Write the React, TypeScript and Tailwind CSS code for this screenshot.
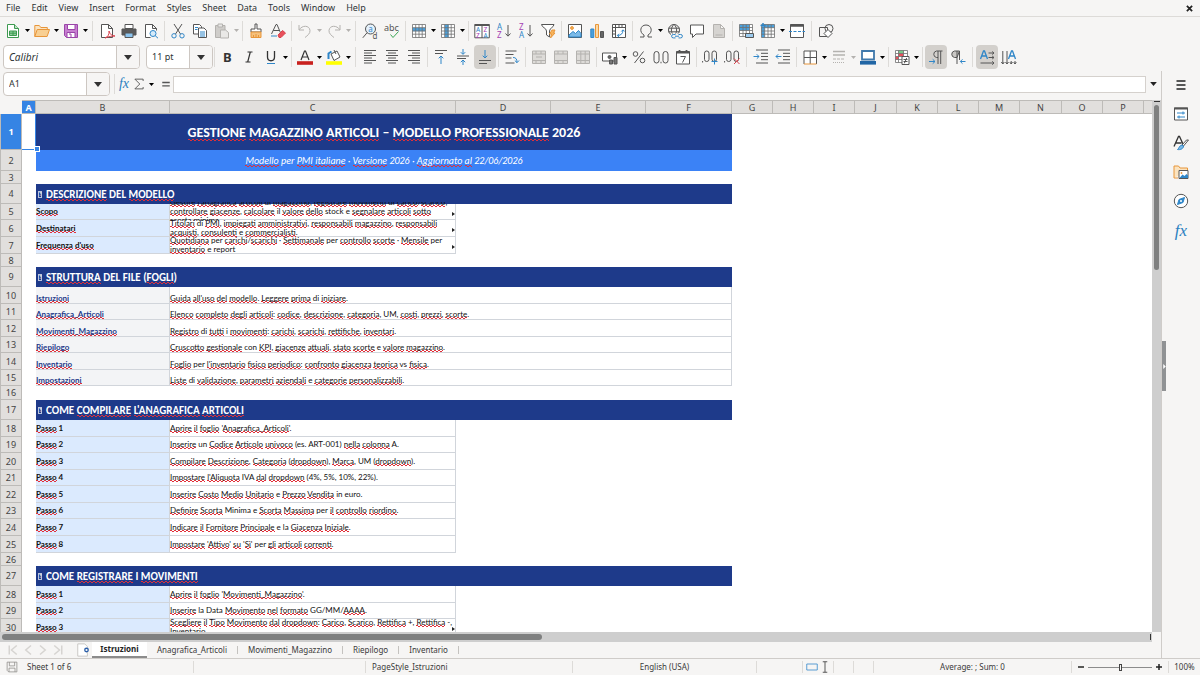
import { Fragment, type ReactNode } from "react";

const INK = "#555555";
const BLUE = "#2f86c8";
const ORANGE = "#e8963a";
const GREY = "#b4b2af";

/* ---------- icons, all on a 16 x 16 grid ---------- */

const sheetLines = (
  <path d="M1.5 1.5h13v13h-13zM1.5 4.7h13M1.5 8h13M1.5 11.2h13M4.7 1.5v13M8 1.5v13M11.2 1.5v13" stroke="#707070" strokeWidth=".8" />
);

const letter = (x: number, y: number, ch: string, fill: string, size = 7) => (
  <text x={x} y={y} fontSize={size} fill={fill} stroke="none" fontFamily="Noto Sans, sans-serif">{ch}</text>
);

const icons: Record<string, ReactNode> = {
  newDoc: (
    <>
      <path d="M2.5 1.5h7l4 4v9h-11z" fill="#fff" stroke="#3d9a50" />
      <path d="M9.5 1.5v4h4" fill="#bfe3c6" stroke="#3d9a50" />
      <path d="M4.5 8h7v4.5h-7zM4.5 10.2h7M8 8v4.5" fill="#8fd09b" stroke="#3d9a50" />
    </>
  ),
  open: (
    <>
      <path d="M.8 13.5v-11h4.5l1.5 2h6.5v2" fill="#fbe3bf" stroke={ORANGE} />
      <path d="M.8 13.5l2.4-7h12.3l-2.4 7z" fill="#f8cf92" stroke={ORANGE} />
    </>
  ),
  save: (
    <>
      <path d="M1.5 1.5h13v13h-11l-2-2z" fill="#c77fd0" stroke="#9a45a8" />
      <path d="M4.5 1.5H12v5H4.5zM4 9.5h8v5H4z" fill="#fff" stroke="#9a45a8" />
      <path d="M6 11h2v3.5" stroke="#9a45a8" />
    </>
  ),
  pdf: (
    <>
      <path d="M2.5 1.5h7l4 4v9h-11zM9.5 1.5v4h4" fill="#fff" stroke={INK} />
      <path d="M6 15c3-1 4.5-4 4-7 1 3.5 3 5 6 5-3 0-6.5.5-10 2z" stroke="#d8434e" />
    </>
  ),
  print: (
    <>
      <path d="M4 1.5h8v4H4z" fill="#fff" stroke={INK} />
      <path d="M1 6h14v6H1z" fill="#5a5a5a" stroke={INK} />
      <path d="M4 10h8v4.5H4z" fill="#8cc4ee" stroke={INK} />
    </>
  ),
  preview: (
    <>
      <path d="M7.5 14.5h-5v-13h7l4 4v2M9.5 1.5v4h4" fill="#fff" stroke={INK} />
      <circle cx="10" cy="10.5" r="3" fill="#d6ebfa" stroke={BLUE} />
      <path d="M12.2 12.7l2.8 2.5" stroke={BLUE} />
    </>
  ),
  cut: (
    <>
      <path d="M4 1l6.5 10M12 1L5.5 11" stroke={INK} />
      <circle cx="4" cy="12.8" r="2.2" stroke={BLUE} />
      <circle cx="12" cy="12.8" r="2.2" stroke={BLUE} />
    </>
  ),
  copy: (
    <>
      <path d="M1.5 1.5h6l2 2V11h-8z" fill="#fff" stroke={INK} />
      <path d="M6.5 5H12l2.5 2.5v7h-8z" fill="#fff" stroke={INK} />
      <path d="M3 4.5h3M3 6.5h2.5M8 9h5M8 11h5M8 13h5" stroke={BLUE} />
    </>
  ),
  paste: (
    <>
      <path d="M1.5 2.5H11v12H1.5z" fill="#cfcdca" stroke={GREY} />
      <path d="M4 1h4.5v3H4z" fill="#e9e8e6" stroke={GREY} />
      <path d="M6.5 7h5l3 2.5V15h-8z" fill="#e9e8e6" stroke={GREY} />
    </>
  ),
  brush: (
    <>
      <path d="M7 1h2v5h4v3H3V6h4z" fill="#fff" stroke={INK} />
      <path d="M3 9h10v5.5H3z" fill="#f5c17d" stroke={ORANGE} />
      <path d="M5.5 12v2.5M8 11v3.5M10.5 12v2.5" stroke={ORANGE} />
    </>
  ),
  clear: (
    <>
      <path d="M1.5 11L6 1.5h1L11 11M3.2 7.5h6" stroke={INK} />
      <path d="M1 13h6" stroke={BLUE} />
      <path d="M8 12l4.5-4.5 3 2.5-4.5 4.5H9z" fill="#e8505b" stroke="#d8434e" />
    </>
  ),
  undo: <path d="M2 2v5h5M2.2 6.8C5 2 12.5 2 13 7.5c.3 3-2.5 5-5 7" stroke={GREY} />,
  redo: <path d="M14 2v5H9M13.8 6.8C11 2 3.5 2 3 7.5c-.3 3 2.5 5 5 7" stroke={GREY} />,
  find: (
    <>
      <circle cx="8.5" cy="6" r="5" fill="#e4f1fb" stroke={INK} />
      <path d="M5 9.8L.8 14.8" stroke={INK} />
      {letter(6.2, 8.5, "a", BLUE, 8)}
      {letter(10.5, 15.5, "d", INK, 8)}
    </>
  ),
  spell: (
    <>
      {letter(0, 8, "abc", INK, 9)}
      <path d="M6.5 11.5l2.5 3 5.5-6" stroke="#3aa655" />
    </>
  ),
  rows: (
    <>
      <path d="M1.5 1.5h13v13h-13z" fill="#fff" />
      <path d="M1.5 4.7h13v3.5h-13z" fill="#4aa0dc" />
      {sheetLines}
    </>
  ),
  cols: (
    <>
      <path d="M1.5 1.5h13v13h-13z" fill="#fff" />
      <path d="M4.7 1.5h4v13h-4z" fill="#4aa0dc" />
      {sheetLines}
    </>
  ),
  sort: (
    <>
      <path d="M.8 1.5h14.5v13.3H.8zM8 3v12" fill="#fff" stroke={INK} />
      <path d="M.8 2h14.5" stroke={INK} strokeWidth="2" />
      {letter(2, 9, "A", BLUE, 6.5)}
      {letter(2, 14.5, "Z", "#a541b3", 6.5)}
      {letter(9.5, 9, "Z", "#a541b3", 6.5)}
      {letter(9.5, 14.5, "A", BLUE, 6.5)}
    </>
  ),
  sortAsc: (
    <>
      {letter(1, 7, "A", BLUE, 8)}
      {letter(1, 15, "Z", "#a541b3", 8)}
      <path d="M12 2v11M9.5 10.5l2.5 2.7 2.5-2.7" stroke={INK} />
    </>
  ),
  sortDesc: (
    <>
      {letter(1, 7, "Z", "#a541b3", 8)}
      {letter(1, 15, "A", BLUE, 8)}
      <path d="M12 2v11M9.5 10.5l2.5 2.7 2.5-2.7" stroke={INK} />
    </>
  ),
  filter: (
    <>
      <path d="M1.5 1.5H14c-.3 3-4.5 3.5-4.5 6.5v6l-3-2V8c0-3-4.7-3.5-5-6.5z" fill="#fff" stroke={INK} />
      <path d="M12 7h3l-1.5 3H15l-4.5 5 1-4H9.5z" fill="#f7b35b" stroke={ORANGE} />
    </>
  ),
  image: (
    <>
      <path d="M1.5 1.5h13v13h-13z" fill="#fff" stroke={INK} />
      <circle cx="5" cy="5" r="1.4" fill="#f7b35b" stroke={ORANGE} />
      <path d="M2 14v-2l4-3.5 2.5 2 3-3 2.5 3V14z" fill="#7cbbe9" stroke={BLUE} />
    </>
  ),
  chart: (
    <>
      <path d="M1.8 6h3v8.5h-3z" fill="#4aa0dc" stroke={BLUE} />
      <path d="M6.5 1.5h3v13h-3z" fill="#fbd9a6" stroke={ORANGE} />
      <path d="M11.5 8.5h3v6h-3z" fill="#666" stroke={INK} />
    </>
  ),
  pivot: (
    <>
      <path d="M1.5 1.5h13v13h-13zM1.5 4.5h13M4.5 1.5v13M8 1.5v3M11 1.5v3M1.5 8h3M1.5 11h3" fill="#fff" stroke={INK} />
      <path d="M6.5 12.5c3.5 0 5.5-2 5.5-5.5M8 10.8l-1.7 1.7L8 14M10.3 8.5L12 6.8l1.7 1.7" stroke={BLUE} />
    </>
  ),
  omega: <path d="M2 14h4v-2C1 9.5 2 2 8 2s7 7.5 2 10v2h4" stroke={INK} />,
  link: (
    <>
      <circle cx="7" cy="7" r="5.5" stroke={INK} />
      <path d="M1.5 5.2h11M1.5 8.8h11M7 1.5c-3.5 3-3.5 8 0 11M7 1.5c3.5 3 3.5 8 0 11" stroke={INK} />
      <path d="M4 10.5h12v5H4z" fill="#f6f5f4" />
      <path d="M8.5 11.5H6.3a1.7 1.7 0 000 3.4h2.2M11.5 11.5h2.2a1.7 1.7 0 010 3.4h-2.2M8 13.2h4" stroke={BLUE} />
    </>
  ),
  comment: <path d="M1.5 2h13v9H7l-3.5 3.5V11h-2z" fill="#fff" stroke={INK} />,
  page: <path d="M2.5 1.5h7l4 4v9h-11zM9.5 1.5v4h4M4.5 12h7" fill="#d6d4d1" stroke={GREY} />,
  printArea: (
    <>
      <path d="M1.5 1.5h13v12h-13z" fill="#fff" />
      <path d="M1.5 1.5h10v6h-10z" fill="#4aa0dc" />
      <path d="M1.5 1.5h13v12h-13zM1.5 4.5h13M1.5 7.5h13M1.5 10.5h13M5 1.5v12M8.2 1.5v12M11.5 1.5v12" stroke="#707070" strokeWidth=".8" />
      <path d="M7.5 10.5h8v4h-8z" fill="#9bcbef" stroke={INK} />
    </>
  ),
  freeze: (
    <>
      <path d="M1.5 1.5h13v13h-13z" fill="#fff" />
      <path d="M1.5 4.5h3.2v10H1.5zM4 1.5h10.5v3.2H4z" fill="#4aa0dc" />
      {sheetLines}
      <path d="M3 0v5M.5 2.5h5" stroke={BLUE} strokeWidth="1.5" />
    </>
  ),
  split: (
    <>
      <path d="M1.5 1.5h13v13h-13z" fill="#fff" stroke={INK} />
      <path d="M1.5 2.5h13" stroke={INK} strokeWidth="2.5" />
      <path d="M0 8.5h16" stroke={BLUE} strokeDasharray="3 1.5" />
    </>
  ),
  shapes: (
    <>
      <path d="M1.5 4.5h8v9h-8z" stroke={INK} />
      <circle cx="11" cy="5.5" r="4" stroke={INK} />
      <path d="M10 6.5l4 4-4 4-4-4z" fill="#fff" stroke={INK} />
    </>
  ),
  bold: <text x="4" y="13" fontSize="13" fontWeight="700" fill="#333" fontFamily="Noto Sans, sans-serif">B</text>,
  italic: <path d="M6.5 3h5M4.5 13h5M9.3 3l-2.6 10" stroke="#333" strokeWidth="1.2" />,
  underline: (
    <>
      <path d="M4.5 2v6c0 5 7 5 7 0V2" stroke="#333" strokeWidth="1.3" />
      <path d="M4 14.5h8" stroke={BLUE} />
    </>
  ),
  fontColor: (
    <>
      <path d="M4 11L7.5 2h1L12 11M5.3 8h5.4" stroke="#333" strokeWidth="1.2" />
      <path d="M0 12.2h16v3.6H0z" fill="#c9211e" />
    </>
  ),
  fillColor: (
    <>
      <path d="M5 5l6-3 3 6-6 3.5zM8 1l2 4" fill="#fff" stroke={INK} />
      <path d="M2.5 10V4.5l3-2" stroke={BLUE} strokeWidth="2" />
      <path d="M0 12.2h16v3.6H0z" fill="#ff0" />
    </>
  ),
  left: <path d="M2 1.5h12M2 4h8M2 6.5h12M2 9h8M2 11.5h12M2 14h8" stroke={INK} />,
  center: <path d="M2 1.5h12M4 4h8M2 6.5h12M4 9h8M2 11.5h12M4 14h8" stroke={INK} />,
  right: <path d="M2 1.5h12M6 4h8M2 6.5h12M6 9h8M2 11.5h12M6 14h8" stroke={INK} />,
  top: (
    <>
      <path d="M2 1.5h12M2 4.5h8" stroke={INK} />
      <path d="M8 15V7M5.7 9.3L8 7l2.3 2.3" stroke={BLUE} />
    </>
  ),
  middle: (
    <>
      <path d="M2 7h12M2 9.5h9" stroke={INK} />
      <path d="M8 0v5M5.8 3.2L8 5.4l2.2-2.2M8 16v-5M5.8 13.2L8 11l2.2 2.2" stroke={BLUE} />
    </>
  ),
  bottom: (
    <>
      <path d="M2 11.5h12M2 14.5h8" stroke={INK} />
      <path d="M8 1v8M5.7 6.7L8 9l2.3-2.3" stroke={BLUE} />
    </>
  ),
  wrap: (
    <>
      <path d="M1.5 2h11M1.5 5.5h8M1.5 9h6M1.5 14h9" stroke={INK} />
      <path d="M9 8.5c3 0 4 1.5 4 5M10.8 11.5l2.2 2.2 2-2.2" stroke={BLUE} />
    </>
  ),
  merge: <path d="M1.5 2h13v12.5h-13zM1.5 5h13M1.5 11.5h13M5 2v3M10 2v3M5 11.5v3M10 11.5v3M5 8h6" fill="#dddbd8" stroke={GREY} />,
  mergeCells: <path d="M1.5 2h13v12.5h-13zM1.5 5h13M1.5 11.5h13M5 2v3M10 2v3M5 11.5v3M10 11.5v3" fill="#dddbd8" stroke={GREY} />,
  unmerge: <path d="M1.5 2h13v12.5h-13zM1.5 5h13M1.5 11.5h13M5.8 2v12.5M10.2 2v12.5" fill="#dddbd8" stroke={GREY} />,
  currency: (
    <>
      <path d="M.5 4h14v8H.5z" fill="#fff" stroke={INK} />
      <circle cx="7.5" cy="8" r="1.5" fill="#666" stroke={INK} />
      <path d="M7.5 11h3v4h-3zM12 8.5h3V15h-3z" fill="#777" stroke={INK} />
    </>
  ),
  percent: (
    <>
      <circle cx="4.5" cy="5" r="2.3" stroke={INK} />
      <circle cx="11.5" cy="11.5" r="2.3" stroke={INK} />
      <path d="M12.5 2.5l-9 11.5" stroke={INK} />
    </>
  ),
  number: (
    <>
      <rect x="1" y="2.5" width="5" height="11.5" rx="2.5" stroke={INK} />
      <rect x="10" y="2.5" width="5" height="11.5" rx="2.5" stroke={INK} />
      <path d="M8 12.8v1.5" stroke={INK} />
    </>
  ),
  date: (
    <>
      <path d="M1.5 2.5h13V15h-13z" fill="#fff" stroke={INK} />
      <path d="M1.5 3.5h13M4.5 1v3M11.5 1v3" stroke={INK} strokeWidth="1.8" />
      <path d="M5.5 7.5h5l-3 6" stroke={INK} />
    </>
  ),
  addDec: (
    <>
      <rect x="2.5" y="2" width="4.5" height="10.5" rx="2.2" stroke={INK} />
      <rect x="10" y="2" width="4.5" height="10.5" rx="2.2" stroke={INK} />
      <path d="M.6 12v1.5" stroke={INK} />
      <path d="M12.5 9.5v6M9.5 12.5h6" stroke={BLUE} />
    </>
  ),
  delDec: (
    <>
      <rect x="2.5" y="2" width="4.5" height="10.5" rx="2.2" stroke={INK} />
      <rect x="10" y="2" width="4.5" height="10.5" rx="2.2" stroke={INK} />
      <path d="M.6 12v1.5" stroke={INK} />
      <path d="M10 9.5l5.5 5.5M15.5 9.5L10 15" stroke="#d8434e" />
    </>
  ),
  indent: (
    <>
      <path d="M3 1h12M8 4.3h7M8 7.5h7M8 10.7h7M3 14h12" stroke={INK} />
      <path d="M.5 7.5H6M3.8 5.3L6 7.5 3.8 9.7" stroke={BLUE} />
    </>
  ),
  outdent: (
    <>
      <path d="M3 1h12M8 4.3h7M8 7.5h7M8 10.7h7M3 14h12" stroke={INK} />
      <path d="M6.5 7.5H1M3.2 5.3L1 7.5l2.2 2.2" stroke={BLUE} />
    </>
  ),
  borders: (
    <>
      <path d="M2 15V2h12.5v13M8.2 2v13M2 8.5h12.5" fill="#fff" stroke={INK} />
      <path d="M2 15h12.5" stroke={ORANGE} />
    </>
  ),
  lineStyle: (
    <>
      <path d="M2 2.5h12M2 6h12" stroke={GREY} strokeWidth="1.5" />
      <path d="M2 10h12" stroke={GREY} strokeDasharray="3 1" />
      <path d="M2 13.5h12" stroke={GREY} strokeDasharray="1 1" />
    </>
  ),
  lineColor: (
    <>
      <path d="M2 2h12v8.5H2z" fill="#fff" stroke="#3f78ab" strokeWidth="1.8" />
      <path d="M0 12h16v3.6H0z" fill="#2166a5" />
    </>
  ),
  conditional: (
    <>
      <path d="M1.5 1.5h12v12h-12z" fill="#fff" />
      <path d="M4.5 1.5h5v3h-5z" fill="#79c789" />
      <path d="M4.5 4.5h5v3h-5zM1.5 7.5h3v3h-3z" fill="#e8505b" />
      <path d="M1.5 1.5h12v12h-12zM1.5 4.5h12M1.5 7.5h12M1.5 10.5h12M4.5 1.5v12M9.5 1.5v12" stroke="#707070" strokeWidth=".8" />
      <path d="M8 7.5h7v8H8z" fill="#fff" stroke={INK} />
      <path d="M9.5 10.5h4M9.5 12.5h4M12.7 9l-2.4 5.3" stroke={INK} />
    </>
  ),
  ltr: (
    <>
      <path d="M14.5 2h-6a3.3 3.3 0 000 6.5H10M10 2v13M12.7 2v13" stroke={INK} />
      <path d="M1 12.5h6M4.7 10.3L7 12.5l-2.3 2.2" stroke={BLUE} />
    </>
  ),
  rtl: (
    <>
      <path d="M9.5 2h-5a3.3 3.3 0 000 6.5H7z" fill="#c9c7c4" stroke={INK} />
      <path d="M7 2v13M9.5 2v9" stroke={INK} />
      <path d="M15.5 12.5h-5M12.5 10.3l-2.2 2.2 2.2 2.2" stroke={BLUE} />
    </>
  ),
  textLtr: (
    <>
      <path d="M1.5 10l3-8h1l3 8M2.5 7h5" stroke={BLUE} strokeWidth="1.3" />
      <path d="M9.5 4H15M13.2 2.5L15 4l-1.8 1.5M9.5 8.5H15M13.2 7L15 8.5 13.2 10M1.5 14H15M13.2 12.3L15 14l-1.8 1.7" stroke={INK} />
    </>
  ),
  textTtb: (
    <>
      <path d="M7.5 10l3-8h1l3 8M8.5 7h5" stroke={BLUE} strokeWidth="1.3" />
      <path d="M1.8 2v13M.3 13l1.5 2 1.5-2M6 2v13M4.5 13L6 15l1.5-2M10.2 12v3M8.9 13.2l1.3 1.8 1.3-1.8M14 12v3M12.7 13.2L14 15l1.3-1.8" stroke={INK} />
    </>
  ),
  menu: <path d="M3.5 4h9M3.5 8h9M3.5 12h9" stroke="#222" strokeWidth="1.5" />,
  properties: (
    <>
      <path d="M1.5 2h13v12h-13z" fill="#fff" stroke={INK} />
      <path d="M1 2.5h14" stroke={INK} strokeWidth="2" />
      <path d="M4 7h8M4 11h8M10 5.5v3M6 9.5v3" stroke={BLUE} />
    </>
  ),
  styles: (
    <>
      <path d="M1 11.5l4.5-10h1L10 9M3 8h5.5" stroke="#333" strokeWidth="1.3" />
      <path d="M15.5 5l-5 6L9 10l4.5-5z" fill="#fff" stroke={INK} />
      <path d="M4.5 14.5c1 0 2-4.5 4.5-4.5l1.5 1c0 3-3.5 4-6 3.5z" fill="#7cbbe9" stroke={BLUE} />
    </>
  ),
  gallery: (
    <>
      <path d="M1 14V2h4.5L7 4h7.5v3M1 14h4" fill="#fbe3bf" stroke={ORANGE} />
      <path d="M6 6.5h9v8H6z" fill="#fff" stroke={INK} />
      <path d="M6.5 14l3-3.5 2 1.5 2-2 1.5 1.5V14z" fill="#2f86c8" />
      <circle cx="8.5" cy="9" r=".9" fill={ORANGE} />
    </>
  ),
  navigator: (
    <>
      <circle cx="8" cy="8" r="6.7" fill="#fff" stroke={INK} />
      <path d="M11.5 4.5l-1.5 5-5.5 2 1.5-5z" fill="#2f86c8" stroke={BLUE} />
      <circle cx="8" cy="8" r="1" fill="#fff" />
    </>
  ),
  sigma: <path d="M13.5 4V1.5h-11L9 8l-6.5 6.5h11V12" stroke={INK} strokeWidth="1.2" />,
  equals: <path d="M3 6h10M3 10.5h10" stroke={INK} strokeWidth="1.8" />,
  disk: <path d="M1.5 1.5h13v13h-11l-2-2zM4.5 1.5v5h7v-5M4 14.5v-5h8v5" stroke="#8c8a87" />,
  selection: <path d="M1 4h14v8H1z" stroke="#4a94cf" strokeWidth="1.2" />,
  cursor: <path d="M5 1h6M5 15h6M8 1v14" stroke={INK} strokeWidth="1.3" />,
};

function Icon({ name, className = "size-4" }: { name: string; className?: string }) {
  return (
    <svg viewBox="0 0 16 16" fill="none" className={`${className} shrink-0 overflow-visible`} aria-hidden="true">
      {icons[name]}
    </svg>
  );
}

function Fx({ className }: { className: string }) {
  return <span className={`font-['Liberation_Serif',serif] italic text-[#2a7fc0] ${className}`}>fx</span>;
}

function Caret({ className = "text-black" }: { className?: string }) {
  return (
    <svg viewBox="0 0 10 6" className={`w-[5px] h-[3px] shrink-0 ${className}`} aria-hidden="true">
      <path d="M0 0h10L5 6z" fill="currentColor" />
    </svg>
  );
}

/* ---------- toolbars ---------- */

// "|" is a narrow separator, "||" a wide one; "v" opens a drop-down, "-v" is a disabled one
const standardBar = [
  "newDoc", "v", "open", "v", "save", "v", "||", "pdf", "print", "preview", "|",
  "cut", "copy", "paste", "-v", "|", "brush", "clear", "|", "undo", "-v", "redo", "-v", "||",
  "find", "spell", "|", "rows", "v", "cols", "v", "|", "sort", "sortAsc", "sortDesc", "filter", "|",
  "image", "chart", "pivot", "|", "omega", "v", "link", "comment", "page", "|",
  "printArea", "freeze", "v", "split", "||", "shapes",
];

const formatBar = [
  "bold", "italic", "underline", "v", "|", "fontColor", "v", "fillColor", "v", "||",
  "left", "center", "right", "|", "top", "middle", "bottom", "|", "wrap", "|",
  "merge", "mergeCells", "unmerge", "|", "currency", "v", "percent", "number", "date", "|",
  "addDec", "delDec", "||", "indent", "outdent", "|", "borders", "v", "lineStyle", "-v", "lineColor", "v", "|",
  "conditional", "v", "|", "ltr", "rtl", "||", "textLtr", "textTtb",
];

const pressed = ["bottom", "ltr", "textLtr"];

function ToolItems({ items }: { items: string[] }) {
  return (
    <>
      {items.map((item, i) => {
        if (item === "|" || item === "||") {
          return (
            <div key={i} className={`flex justify-center shrink-0 ${item === "|" ? "w-[5px]" : "w-[7px]"}`}>
              <div className="w-px h-5 bg-[#dddbd8]" />
            </div>
          );
        }
        if (item === "v" || item === "-v") {
          return (
            <button key={i} aria-label="More" className="w-[7px] h-6 flex items-center justify-center shrink-0">
              <Caret className={item === "v" ? "text-black" : "text-[#b4b2af]"} />
            </button>
          );
        }
        return (
          <button
            key={i}
            aria-label={item}
            className={`w-[22px] h-6 rounded flex items-center justify-center shrink-0 ${pressed.includes(item) ? "bg-[#d3d0cc]" : ""}`}
          >
            <Icon name={item} />
          </button>
        );
      })}
    </>
  );
}

function ComboBox({ label, value, className, inputClass = "" }: { label: string; value: string; className: string; inputClass?: string }) {
  return (
    <div className={`flex h-6 rounded border border-[#cdc7c2] bg-white overflow-hidden shrink-0 ${className}`}>
      <input aria-label={label} defaultValue={value} className={`flex-1 min-w-0 pl-[5px] outline-none ${inputClass}`} />
      <button aria-label={`${label} list`} className="w-[23px] border-l border-[#cdc7c2] bg-[#f6f5f4] flex items-center justify-center">
        <svg viewBox="0 0 10 6" className="w-2 h-[5px]" aria-hidden="true">
          <path d="M0 0h10L5 6z" fill="#333" />
        </svg>
      </button>
    </div>
  );
}

/* ---------- sheet ---------- */

type Row = {
  h: string;
  kind?: "title" | "subtitle" | "section" | "sheet" | "info" | "step";
  label?: string;
  text?: string;
};

// words in [brackets] carry the spell checker's red wave
const rows: Row[] = [
  { h: "h-9", kind: "title", text: "[GESTIONE] [MAGAZZINO] [ARTICOLI] – [MODELLO] [PROFESSIONALE] 2026" },
  { h: "h-[21px]", kind: "subtitle", text: "[Modello] per [PMI] [italiane] · [Versione] 2026 · [Aggiornato] [al] 22/06/2026" },
  { h: "h-[13px]" },
  { h: "h-5", kind: "section", text: "[DESCRIZIONE] DEL [MODELLO]" },
  { h: "h-4", kind: "info", label: "[Scopo]", text: "[Gestire] [l'anagrafica] [articoli] di [magazzino], [registrare] [movimenti] di [carico]/[scarico],\n[controllare] [giacenze], [calcolare] il [valore] [dello] stock e [segnalare] [articoli] [sotto]\n[scorta] [minima]." },
  { h: "h-[17px]", kind: "info", label: "[Destinatari]", text: "[Titolari] di [PMI], [impiegati] [amministrativi], [responsabili] [magazzino], [responsabili]\n[acquisti], [consulenti] e [commercialisti]." },
  { h: "h-[17px]", kind: "info", label: "[Frequenza] [d'uso]", text: "[Quotidiana] per [carichi]/[scarichi] · [Settimanale] per [controllo] [scorte] · [Mensile] per\n[inventario] e report" },
  { h: "h-[13px]" },
  { h: "h-5", kind: "section", text: "[STRUTTURA] DEL FILE ([FOGLI])" },
  { h: "h-[17px]", kind: "sheet", label: "[Istruzioni]", text: "[Guida] [all'uso] [del] [modello]. [Leggere] [prima] di [iniziare]." },
  { h: "h-4", kind: "sheet", label: "[Anagrafica_Articoli]", text: "[Elenco] [completo] [degli] [articoli]: [codice], [descrizione], [categoria], UM, [costi], [prezzi], [scorte]." },
  { h: "h-[17px]", kind: "sheet", label: "[Movimenti_Magazzino]", text: "[Registro] di [tutti] i [movimenti]: [carichi], [scarichi], [rettifiche], [inventari]." },
  { h: "h-4", kind: "sheet", label: "[Riepilogo]", text: "[Cruscotto] [gestionale] con [KPI], [giacenze] [attuali], [stato] [scorte] e [valore] [magazzino]." },
  { h: "h-[17px]", kind: "sheet", label: "[Inventario]", text: "[Foglio] per [l'inventario] [fisico] [periodico]: [confronto] [giacenza] [teorica] vs [fisica]." },
  { h: "h-4", kind: "sheet", label: "[Impostazioni]", text: "[Liste] di [validazione], [parametri] [aziendali] e [categorie] [personalizzabili]." },
  { h: "h-[14px]" },
  { h: "h-5", kind: "section", text: "COME [COMPILARE] [L'ANAGRAFICA] [ARTICOLI]" },
  { h: "h-[17px]", kind: "step", label: "[Passo] 1", text: "[Aprire] [il] [foglio] '[Anagrafica_Articoli]'." },
  { h: "h-4", kind: "step", label: "[Passo] 2", text: "[Inserire] un [Codice] [Articolo] [univoco] (es. ART-001) [nella] [colonna] A." },
  { h: "h-[17px]", kind: "step", label: "[Passo] 3", text: "[Compilare] [Descrizione], [Categoria] ([dropdown]), [Marca], UM ([dropdown])." },
  { h: "h-4", kind: "step", label: "[Passo] 4", text: "[Impostare] [l'Aliquota] IVA [dal] [dropdown] (4%, 5%, 10%, 22%)." },
  { h: "h-[17px]", kind: "step", label: "[Passo] 5", text: "[Inserire] [Costo] [Medio] [Unitario] e [Prezzo] [Vendita] in euro." },
  { h: "h-4", kind: "step", label: "[Passo] 6", text: "[Definire] [Scorta] Minima e [Scorta] [Massima] per [il] [controllo] [riordino]." },
  { h: "h-[17px]", kind: "step", label: "[Passo] 7", text: "[Indicare] [il] [Fornitore] [Principale] e la [Giacenza] [Iniziale]." },
  { h: "h-[17px]", kind: "step", label: "[Passo] 8", text: "[Impostare] '[Attivo]' [su] '[Sì]' per [gli] [articoli] [correnti]." },
  { h: "h-[13px]" },
  { h: "h-5", kind: "section", text: "COME [REGISTRARE] I [MOVIMENTI]" },
  { h: "h-[17px]", kind: "step", label: "[Passo] 1", text: "[Aprire] [il] [foglio] '[Movimenti_Magazzino]'." },
  { h: "h-4", kind: "step", label: "[Passo] 2", text: "[Inserire] la Data [Movimento] [nel] [formato] GG/MM/[AAAA]." },
  { h: "h-[17px]", kind: "info", label: "[Passo] 3", text: "[Scegliere] [il] [Tipo] [Movimento] [dal] [dropdown]: [Carico], [Scarico], [Rettifica] +, [Rettifica] -,\n[Inventario]" },
];

const columns = [
  ["A", "w-[14px]"], ["B", "w-[134px]"], ["C", "w-[286px]"], ["D", "w-[95px]"], ["E", "w-[95px]"], ["F", "w-[86px]"],
  ["G", "w-[41px]"], ["H", "w-[41px]"], ["I", "w-[41px]"], ["J", "w-[42px]"], ["K", "w-[41px]"], ["L", "w-[41px]"],
  ["M", "w-[41px]"], ["N", "w-[42px]"], ["O", "w-[41px]"], ["P", "w-[41px]"],
];

const wave =
  "bg-repeat-x bg-[image:linear-gradient(90deg,#e0303a_50%,transparent_50%),linear-gradient(90deg,transparent_50%,#e0303a_50%)] bg-[length:4px_1px,4px_1px] bg-[position:0_calc(100%_-_1px),0_100%]";

function Spelled({ text }: { text: string }) {
  return (
    <>
      {text.split(/\[(.+?)\]/).map((part, i) =>
        i % 2 ? <span key={i} className={wave}>{part}</span> : <Fragment key={i}>{part}</Fragment>
      )}
    </>
  );
}

function Cells({ row }: { row: Row }) {
  const text = row.text ?? "";
  const label = row.label ?? "";

  switch (row.kind) {
    case "title":
      return (
        <td colSpan={5} className="bg-[#1e3a8a] text-white text-center font-bold font-['Carlito','Lato',sans-serif] text-[14px]"><Spelled text={text} /></td>
      );
    case "subtitle":
      return (
        <td colSpan={5} className="bg-[#3b82f6] text-white text-center italic font-['Carlito','Lato',sans-serif] text-[10px]"><Spelled text={text} /></td>
      );
    case "section":
      return (
        <td colSpan={5} className="bg-[#1e3a8a] text-white font-bold font-['Carlito','Lato',sans-serif] text-[11px]">
          <div className="flex items-center gap-1 pl-[2px]">
            <span className="w-1 h-[7px] border border-white/70 text-[5px] leading-[5px] text-center">?</span>
            <span><Spelled text={text} /></span>
          </div>
        </td>
      );
    case "sheet":
      return (
        <>
          <td className="align-bottom bg-[#f3f4f6] border-r border-b border-[#d1d5db] font-bold text-[#1e3a8a]"><Spelled text={label} /></td>
          <td colSpan={4} className="align-bottom border-r border-b border-[#d1d5db]"><Spelled text={text} /></td>
        </>
      );
    case "info":
      return (
        <>
          <td className="bg-[#dbeafe] border-r border-b border-[#d1d5db] font-bold"><Spelled text={label} /></td>
          <td className="relative border-r border-b border-[#d1d5db]">
            <div className="flex items-center h-[15px] overflow-clip [overflow-clip-margin:2px] whitespace-pre">
              <span><Spelled text={text} /></span>
            </div>
            <svg viewBox="0 0 3 4" className="absolute right-0 top-1/2 w-[3px] h-1" aria-hidden="true">
              <path d="M0 0l3 2-3 2z" fill="#222" />
            </svg>
          </td>
        </>
      );
    case "step":
      return (
        <>
          <td className="bg-[#dbeafe] border-r border-b border-[#d1d5db] font-bold"><Spelled text={label} /></td>
          <td className="border-r border-b border-[#d1d5db]"><Spelled text={text} /></td>
        </>
      );
    default:
      return <td colSpan={5} />;
  }
}

function Sheet() {
  return (
    <div className="flex-1 min-w-0 overflow-hidden bg-white">
      <table className="w-full table-fixed border-separate border-spacing-0 font-['Lato',sans-serif] text-[8px] leading-[9px] text-[#111]">
        <colgroup>
          <col className="w-[22px]" />
          {columns.map(([name, width]) => (
            <col key={name} className={width} />
          ))}
          <col />
        </colgroup>
        <thead>
          <tr className="h-[14px] font-['Noto_Sans',sans-serif] text-[9px] text-[#444]">
            <td className="bg-[#f6f5f4]" />
            {columns.map(([name]) => (
              <th
                key={name}
                className={`p-0 border-t border-r border-b border-[#bdbbb8] ${name === "A" ? "bg-[#3584e4] text-white font-bold" : "bg-[#e1dfdd] font-normal"}`}
              >
                {name}
              </th>
            ))}
            <td className="bg-[#e1dfdd] border-t border-b border-[#bdbbb8]" />
          </tr>
        </thead>
        <tbody>
          {rows.map((row, i) => (
            <tr key={i} className={row.h}>
              <th
                scope="row"
                className={`p-0 border-l border-r border-b border-[#bdbbb8] font-['Noto_Sans',sans-serif] text-[9px] ${i === 0 ? "bg-[#3584e4] text-white font-bold" : "bg-[#e1dfdd] text-[#444] font-normal"}`}
              >
                {i + 1}
              </th>
              {i === 0 ? (
                <td className="relative border-b border-r border-[#3584e4]">
                  <span className="absolute -right-1 -bottom-0.5 size-1 bg-[#3584e4] outline outline-white" />
                </td>
              ) : (
                <td />
              )}
              <Cells row={row} />
              <td colSpan={11} />
            </tr>
          ))}
        </tbody>
      </table>
    </div>
  );
}

/* ---------- frame ---------- */

const menus = ["File", "Edit", "View", "Insert", "Format", "Styles", "Sheet", "Data", "Tools", "Window", "Help"];
const tabs = ["Anagrafica_Articoli", "Movimenti_Magazzino", "Riepilogo", "Inventario"];
const navIcons = ["M3 2v12M13 2L6 8l7 6", "M12 2L5 8l7 6", "M4 2l7 6-7 6", "M13 2v12M3 2l7 6-7 6"];

function SheetTabs() {
  return (
    <nav className="flex h-4 items-stretch text-[8px] text-[#3a3a3a]">
      <div className="flex items-center pl-[5px] w-[74px]">
        {navIcons.map((d) => (
          <button key={d} aria-label="Scroll tabs" className="w-[15px] flex justify-center">
            <svg viewBox="0 0 16 16" className="size-3" fill="none" stroke="#d6d4d1" strokeWidth="2"><path d={d} /></svg>
          </button>
        ))}
      </div>
      <button aria-label="Add sheet" className="w-[18px] flex items-center justify-center">
        <svg viewBox="0 0 16 16" className="size-[14px]" fill="none">
          <path d="M2 1h8l3 3v11H2z" fill="#fff" stroke="#c4c2bf" />
          <circle cx="12" cy="8" r="2" fill="#fff" stroke="#2c5fa8" strokeWidth="1.5" />
        </svg>
      </button>
      <button className="w-[55px] bg-white font-bold border-b-2 border-[#8c8c8c] text-[#222]">Istruzioni</button>
      {tabs.map((tab) => (
        <button key={tab} className="flex items-center pl-[10px]">
          {tab}
          <span className="ml-[10px] w-px h-2 bg-[#c4c2bf]" />
        </button>
      ))}
    </nav>
  );
}

function StatusBar() {
  const cell = "flex items-center justify-center border-r border-[#dddbd8]";
  return (
    <footer className="flex items-stretch h-[17px] py-0.5 border-t border-[#cfccc9] text-[8px] text-[#3a3a3a] shrink-0">
      <div className="flex items-center gap-[9px] w-[194px] pl-[6px] border-r border-[#dddbd8]">
        <Icon name="disk" className="size-3" />
        Sheet 1 of 6
      </div>
      <div className={`${cell} w-[172px]`} />
      <div className="flex items-center flex-1 pl-[6px] border-r border-[#dddbd8]">PageStyle_Istruzioni</div>
      <div className={`${cell} w-[184px]`}>English (USA)</div>
      <div className={`${cell} w-[46px]`} />
      <div className={`${cell} w-[31px] gap-px`}>
        <Icon name="selection" className="size-3" />
        <Icon name="cursor" className="size-3" />
      </div>
      <div className={`${cell} w-5`} />
      <div className={`${cell} w-5`} />
      <div className={`${cell} w-[198px]`}>Average: ; Sum: 0</div>
      <div className={`${cell} w-[97px] gap-[3px]`}>
        <button aria-label="Zoom out">
          <svg viewBox="0 0 8 8" className="size-2" stroke="#222" strokeWidth="1.5"><path d="M1 4h6" /></svg>
        </button>
        <input
          type="range"
          aria-label="Zoom"
          className="w-16 h-2 appearance-none bg-transparent [&::-webkit-slider-runnable-track]:h-px [&::-webkit-slider-runnable-track]:bg-[#8c8c8c] [&::-webkit-slider-thumb]:appearance-none [&::-webkit-slider-thumb]:w-[3px] [&::-webkit-slider-thumb]:h-[7px] [&::-webkit-slider-thumb]:-mt-[3px] [&::-webkit-slider-thumb]:bg-[#f6f5f4] [&::-webkit-slider-thumb]:border [&::-webkit-slider-thumb]:border-[#444]"
        />
        <button aria-label="Zoom in">
          <svg viewBox="0 0 8 8" className="size-2" stroke="#222" strokeWidth="1.5"><path d="M1 4h6M4 1v6" /></svg>
        </button>
      </div>
      <div className="flex items-center justify-center w-[31px]">100%</div>
    </footer>
  );
}

export default function App() {
  return (
    <div className="flex flex-col h-screen overflow-hidden bg-[#f6f5f4] font-['Noto_Sans',sans-serif] text-[9px] leading-[12px] text-[#2e3436]">
      <header className="flex items-center justify-between h-[17px] border-b border-[#dddbd8] shrink-0">
        <nav className="flex gap-[11px] pl-[6px]">
          {menus.map((menu) => (
            <button key={menu}>{menu}</button>
          ))}
        </nav>
        <button aria-label="Close" className="pr-[7px]">
          <svg viewBox="0 0 8 8" className="size-[7px]" stroke="#222" strokeWidth="2"><path d="M1 1l6 6M7 1L1 7" /></svg>
        </button>
      </header>

      <div className="flex items-center h-[27px] pl-[2px] shrink-0">
        <ToolItems items={standardBar} />
      </div>
      <div className="flex items-center h-[27px] pl-[3px] pb-px shrink-0">
        <ComboBox label="Font name" value="Calibri" className="w-[137px]" inputClass="italic text-[10px]" />
        <ComboBox label="Font size" value="11 pt" className="w-[67px] ml-[6px]" />
        <div className="w-px h-5 mx-px bg-[#dddbd8]" />
        <ToolItems items={formatBar} />
      </div>

      <div className="flex flex-1 min-h-0">
        <main className="flex flex-col flex-1 min-w-0">
          <div className="flex items-center h-[29px] pl-[3px] pb-[3px] shrink-0">
            <ComboBox label="Name box" value="A1" className="w-[107px]" />
            <div className="w-px h-5 ml-[4px] bg-[#dddbd8]" />
            <button aria-label="Function wizard" className="w-[18px] flex justify-center"><Fx className="text-[14px] leading-[16px]" /></button>
            <button aria-label="Sum" className="w-3 flex justify-center"><Icon name="sigma" className="size-3" /></button>
            <button aria-label="More sums" className="w-[13px] flex justify-center"><Caret /></button>
            <button aria-label="Formula" className="w-[15px] flex justify-center"><Icon name="equals" className="size-3" /></button>
            <input aria-label="Input line" className="flex-1 min-w-0 h-[17px] bg-white border border-[#d5d1cd] outline-none" />
            <button aria-label="Expand formula bar" className="w-[15px] flex justify-center">
              <svg viewBox="0 0 10 6" className="w-[7px] h-1" aria-hidden="true"><path d="M0 0h10L5 6z" fill="#222" /></svg>
            </button>
          </div>
          <div className="flex flex-1 min-h-0">
            <Sheet />
            <div className="w-[9px] bg-[#cecece] pt-[1px] flex flex-col items-center gap-[3px]">
              <div className="w-[6px] h-px bg-[#333]" />
              <div className="w-[5px] h-[31%] rounded-full bg-[#7f8080]" />
            </div>
          </div>
          <div className="flex items-center justify-between h-[10px] mr-[9px] pl-[2px] pr-px bg-[#cecece] shrink-0">
            <div className="w-[47%] h-[6px] rounded-full bg-[#7f8080]" />
            <div className="w-px h-[6px] bg-[#333]" />
          </div>
          <SheetTabs />
        </main>

        <aside className="relative w-[39px] border-l border-[#cfccc9] flex flex-col items-center gap-[13px] pt-[6px]">
          {["menu", "properties", "styles", "gallery", "navigator"].map((name) => (
            <button key={name} aria-label={name}><Icon name={name} /></button>
          ))}
          <button aria-label="Functions"><Fx className="text-[17px] leading-[18px]" /></button>
          <button aria-label="Hide sidebar" className="absolute left-0 top-[46%] w-[4px] h-[50px] bg-[#909294] flex items-center justify-center">
            <svg viewBox="0 0 3 6" className="w-[3px] h-[5px]" aria-hidden="true"><path d="M0 0l3 3-3 3z" fill="#fff" /></svg>
          </button>
        </aside>
      </div>
      <StatusBar />
    </div>
  );
}
